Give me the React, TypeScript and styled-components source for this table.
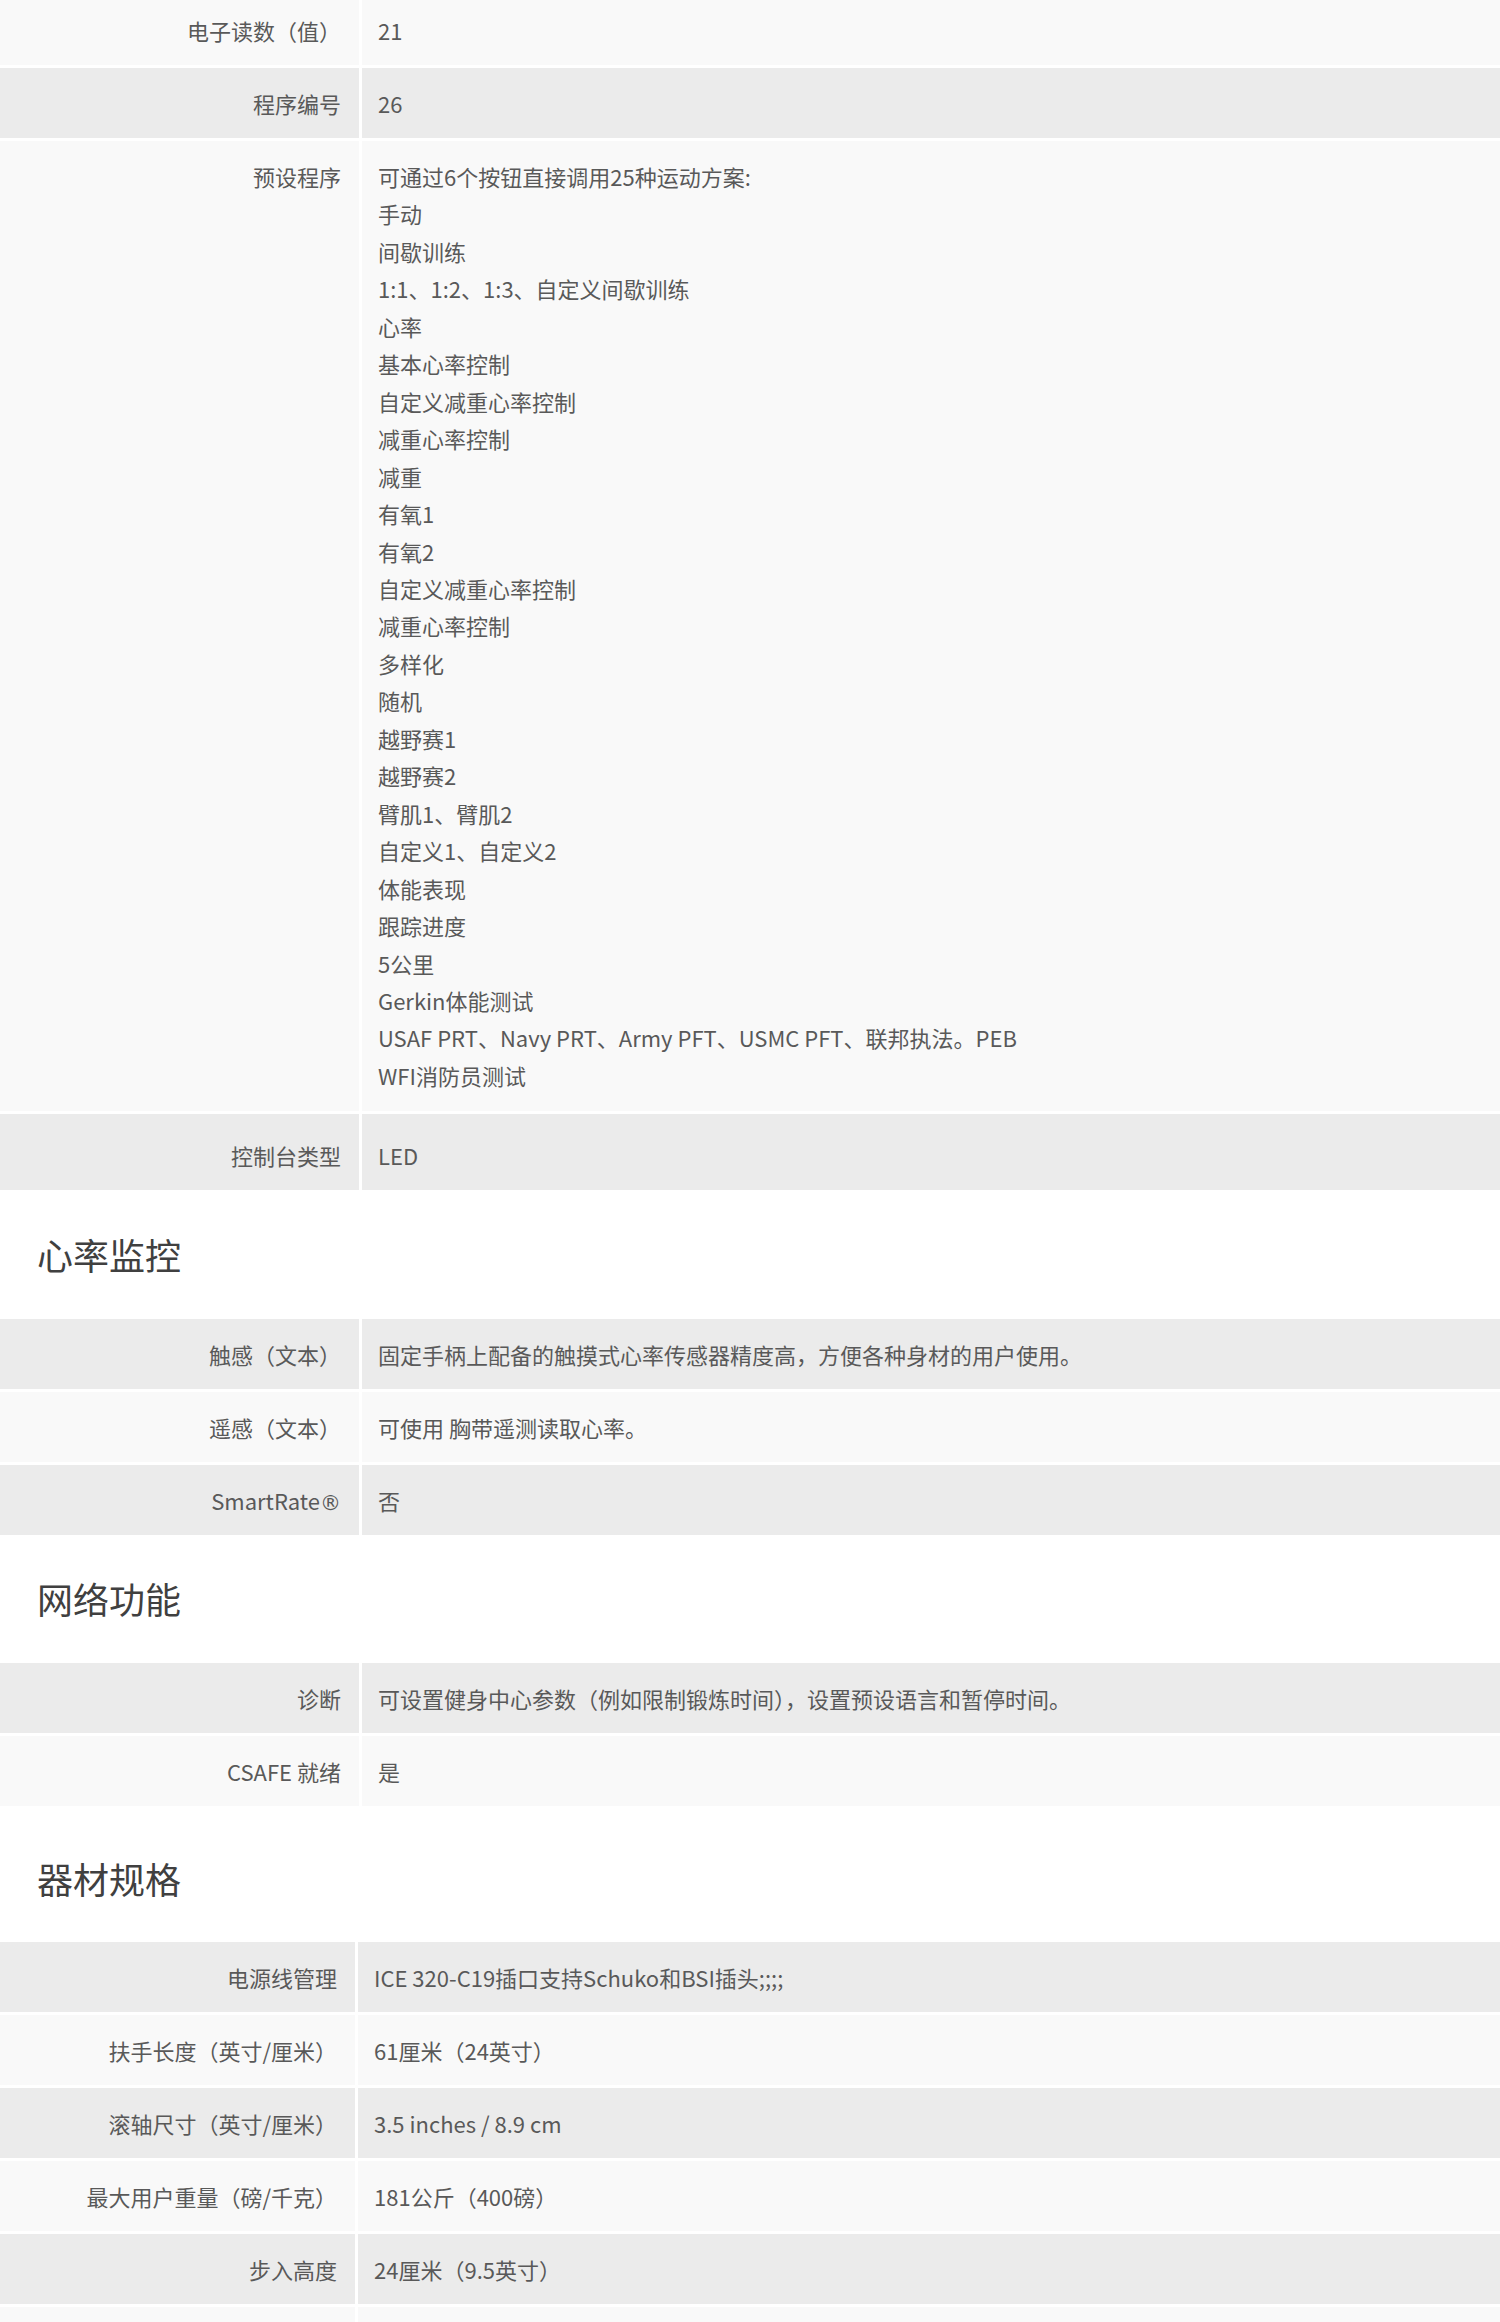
import React from 'react';
import styled, { createGlobalStyle } from 'styled-components';

const GlobalStyle = createGlobalStyle`
  html, body {
    margin: 0;
    padding: 0;
    background: #ffffff;
  }
  body {
    font-family: "Noto Sans CJK SC", "Noto Sans", "Liberation Sans", sans-serif;
    color: #5a5a5a;
  }
`;

const Page = styled.div`
  display: flex;
  flex-direction: column;
  width: 1500px;
  margin-top: -5px;
`;

const Table = styled.div`
  display: flex;
  flex-direction: column;
  gap: 3px;
`;

const Label = styled.div`
  text-align: right;
  padding: 16px 18px 16px 0;
  font-size: 22px;
  line-height: 38px;
  color: #595959;
  white-space: nowrap;
`;

const Value = styled.div`
  padding: 16px 0 16px 16px;
  font-size: 22px;
  line-height: 38px;
  color: #595959;
`;

const Row = styled.div<{ $dark?: boolean; $label?: number; $h?: number; $shift?: number }>`
  display: grid;
  grid-template-columns: ${({ $label }) => $label ?? 359}px 1fr;
  column-gap: 3px;
  min-height: ${({ $h }) => $h ?? 70}px;

  ${Label}, ${Value} {
    background: ${({ $dark }) => ($dark ? '#ebebeb' : '#f9f9f9')};
    display: flex;
    flex-direction: column;
    justify-content: center;
    padding-top: ${({ $shift }) => 16 + ($shift ?? 0)}px;
  }
  ${Label} {
    align-items: flex-end;
  }
`;

const ProgramList = styled.div`
  display: flex;
  flex-direction: column;
  padding: 1px 0 1px;
  line-height: 37.46px;
`;

const Mark = styled.span`
  font-family: "DejaVu Sans", sans-serif;
  font-size: 21px;
  line-height: 0;
`;

const Heading = styled.h2<{ $top: number; $bottom: number }>`
  margin: 0;
  padding: ${({ $top }) => $top}px 0 ${({ $bottom }) => $bottom}px 37px;
  font-size: 36px;
  line-height: 50px;
  font-weight: 400;
  color: #404040;
  background: #ffffff;
`;

const programs = [
  '可通过6个按钮直接调用25种运动方案:',
  '手动',
  '间歇训练',
  '1:1、1:2、1:3、自定义间歇训练',
  '心率',
  '基本心率控制',
  '自定义减重心率控制',
  '减重心率控制',
  '减重',
  '有氧1',
  '有氧2',
  '自定义减重心率控制',
  '减重心率控制',
  '多样化',
  '随机',
  '越野赛1',
  '越野赛2',
  '臂肌1、臂肌2',
  '自定义1、自定义2',
  '体能表现',
  '跟踪进度',
  '5公里',
  'Gerkin体能测试',
  'USAF PRT、Navy PRT、Army PFT、USMC PFT、联邦执法。PEB',
  'WFI消防员测试',
];

type Spec = { label: React.ReactNode; value: string };

const heartRate: Spec[] = [
  { label: '触感（文本）', value: '固定手柄上配备的触摸式心率传感器精度高，方便各种身材的用户使用。' },
  { label: '遥感（文本）', value: '可使用 胸带遥测读取心率。' },
  { label: <span>SmartRate<Mark>®</Mark></span>, value: '否' },
];

const network: Spec[] = [
  { label: '诊断', value: '可设置健身中心参数（例如限制锻炼时间），设置预设语言和暂停时间。' },
  { label: 'CSAFE 就绪', value: '是' },
];

const equipment: Spec[] = [
  { label: '电源线管理', value: 'ICE 320-C19插口支持Schuko和BSI插头;;;;' },
  { label: '扶手长度（英寸/厘米）', value: '61厘米（24英寸）' },
  { label: '滚轴尺寸（英寸/厘米）', value: '3.5 inches / 8.9 cm' },
  { label: '最大用户重量（磅/千克）', value: '181公斤（400磅）' },
  { label: '步入高度', value: '24厘米（9.5英寸）' },
  { label: '', value: '' },
];

const SpecRows = ({ items, label }: { items: Spec[]; label?: number }) => (
  <Table>
    {items.map((item, i) => (
      <Row key={i} $dark={i % 2 === 0} $label={label}>
        <Label>{item.label}</Label>
        <Value>{item.value}</Value>
      </Row>
    ))}
  </Table>
);

const App = () => {
  return (
    <>
      <GlobalStyle />
      <Page>
        <Table>
          <Row>
            <Label>电子读数（值）</Label>
            <Value>21</Value>
          </Row>
          <Row $dark>
            <Label>程序编号</Label>
            <Value>26</Value>
          </Row>
          <Row>
            <Label style={{ justifyContent: 'flex-start' }}>预设程序</Label>
            <Value>
              <ProgramList>
                {programs.map((p, i) => (
                  <span key={i}>{p}</span>
                ))}
              </ProgramList>
            </Value>
          </Row>
          <Row $dark $h={76} $shift={5}>
            <Label>控制台类型</Label>
            <Value>LED</Value>
          </Row>
        </Table>

        <Heading $top={39} $bottom={40}>心率监控</Heading>
        <SpecRows items={heartRate} />

        <Heading $top={38} $bottom={40}>网络功能</Heading>
        <SpecRows items={network} />

        <Heading $top={47} $bottom={39}>器材规格</Heading>
        <SpecRows items={equipment} label={355} />
      </Page>
    </>
  );
};

export default App;
